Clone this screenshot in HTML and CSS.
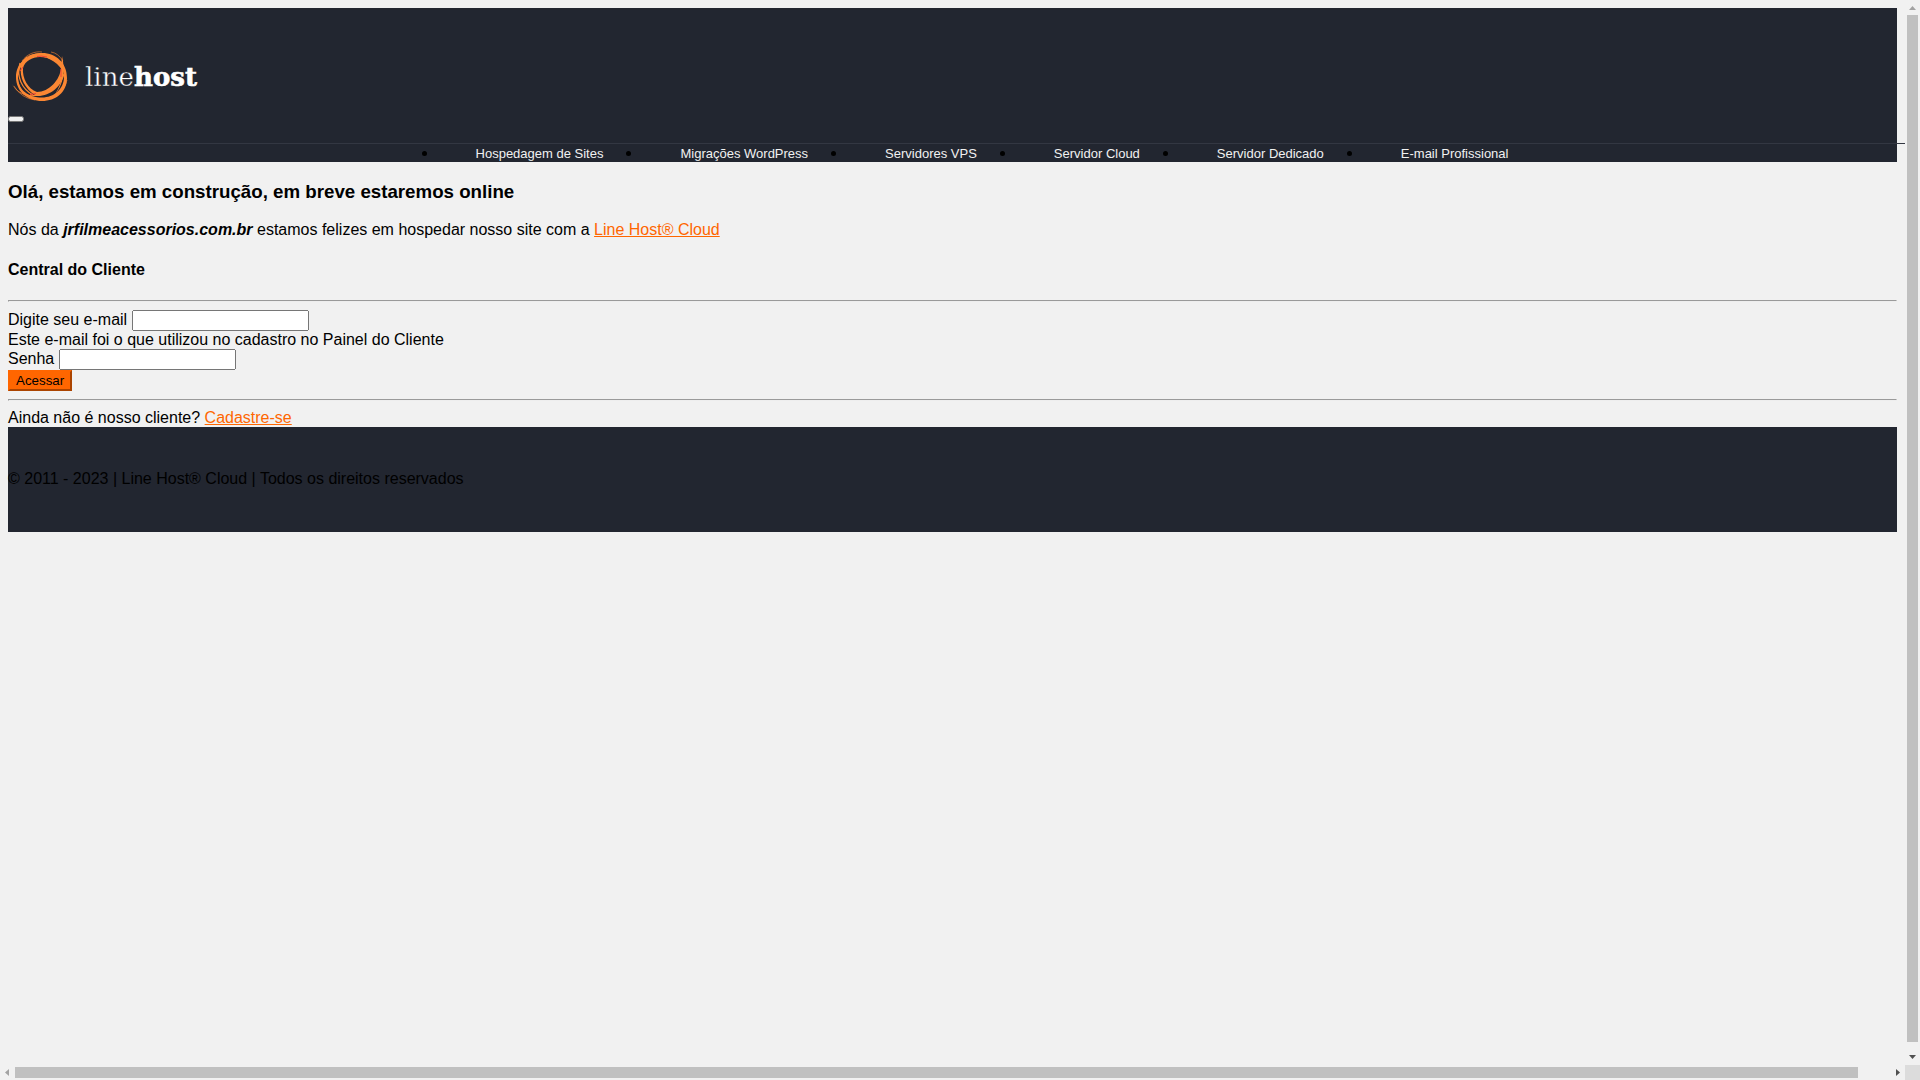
FILE: index.html
```html
<!DOCTYPE html>
<html lang="pt-br">
<head>
    <meta charset="UTF-8">
    <meta name="viewport" content="width=device-width, initial-scale=1">
    <title>Line Host® Cloud</title>
    <link rel="stylesheet" href="styles.css">
</head>
<body>
    <div class="page">
        <header class="header">
            <a class="logo" href="#" aria-label="linehost">
                <svg width="200" height="66" viewBox="0 0 200 66">
                    <g fill="#fb8733">
                        <path fill-rule="evenodd" d="M34 10C48 10 59 20 59 35C59 49 48 58 34 58C20 58 8 49 8 34C8 20 20 10 34 10ZM33 13C21 13 10 22 10 35C10 47 21 54.500 34 54.500C46 54.500 56 46 56 34C56 21 46 13 33 13Z"/>
                        <path fill-rule="evenodd" d="M32 11C43 10 53 17 56 24C56 39 43 52 27 52C17 46 11 34 13 23C16 15 23 12 32 11ZM32 14C24 14 17 18 15 25C14 35 20 46 29 49C41 49 52 37 53 25C49 18 41 14 32 14Z"/>
                        <path d="M17 15C27 7 46 9 55 22L55 28C45 13 28 10 17 15Z"/>
                        <path d="M4 41C9 49 17 53 27 52L30 50C38 51 48 44 53 34L57 29C54 44 41 54 28 53C16 54 8 49 4 41Z"/>
                        <path d="M54 13C57 26 57 41 45 54C53 44 55 33 53 24Z"/>
                    </g>
                    <g fill="none" stroke="#fb8733">
                        <path d="M14 18C19 11 27 8 34 9M43 9Q50 10 55 18M6 43Q13 55 27 57M45 53Q57 48 59 37" stroke-width="0.6"/>
                        <path d="M19 14C9 23 6 37 14 48M12 20C8 34 14 46 25 52" stroke-width="1.2"/>
                    </g>
                    <path d="M29 13.500Q33 12.500 39 14M12 28L15 24M53 26V34M22 51.500L28 50.500" fill="none" stroke="#f04438" stroke-width="1"/>
                    <text class="logo-line" x="77" y="43">line</text>
                    <text class="logo-host" x="126" y="43">host</text>
                </svg>
            </a>
            <button class="menu-toggle" type="button" aria-label="Menu"></button>
            <nav>
                <ul class="menu">
                    <li><a href="#">Hospedagem de Sites</a></li>
                    <li><a href="#">Migrações WordPress</a></li>
                    <li><a href="#">Servidores VPS</a></li>
                    <li><a href="#">Servidor Cloud</a></li>
                    <li><a href="#">Servidor Dedicado</a></li>
                    <li><a href="#">E-mail Profissional</a></li>
                </ul>
            </nav>
        </header>

        <main>
            <h3>Olá, estamos em construção, em breve estaremos online</h3>
            <p>Nós da <b><i>jrfilmeacessorios.com.br</i></b> estamos felizes em hospedar nosso site com a <a class="link" href="#">Line Host® Cloud</a></p>
            <h4>Central do Cliente</h4>
            <hr>
            <form>
                <div>
                    <label for="email">Digite seu e-mail</label>
                    <input type="email" id="email" name="email">
                    <div>Este e-mail foi o que utilizou no cadastro no Painel do Cliente</div>
                </div>
                <div>
                    <label for="senha">Senha</label>
                    <input type="password" id="senha" name="senha">
                </div>
                <button class="btn" type="submit">Acessar</button>
            </form>
            <hr>
            <div>Ainda não é nosso cliente? <a class="link" href="#">Cadastre-se</a></div>
        </main>

        <footer class="footer">© 2011 - 2023 | Line Host® Cloud | Todos os direitos reservados</footer>
    </div>

    <div class="bar bar-y" aria-hidden="true">
        <svg width="15" height="15"><path d="M4 10L7.500 6L11 10Z" fill="#a3a3a3"/></svg>
        <div class="track"><div class="thumb"></div></div>
        <svg width="15" height="15"><path d="M4 5L7.500 9L11 5Z" fill="#505050"/></svg>
    </div>
    <div class="bar bar-x" aria-hidden="true">
        <svg width="15" height="15"><path d="M9 4L5 7.500L9 11Z" fill="#a3a3a3"/></svg>
        <div class="track"><div class="thumb"></div></div>
        <svg width="15" height="15"><path d="M6 4L10 7.500L6 11Z" fill="#505050"/></svg>
    </div>
    <div class="corner"></div>
</body>
</html>
```
FILE: styles.css
```css
* {
    box-sizing: border-box;
}
body {
    margin: 0;
    height: 100vh;
    display: grid;
    grid-template-columns: minmax(0, 1fr) 15px;
    grid-template-rows: minmax(0, 1fr) 15px;
    background: #f1f1f1;
    color: #000;
    font-family: "Liberation Sans", Arial, sans-serif;
    font-size: 16px;
}
.page {
    padding: 8px;
    overflow: hidden;
}
.header {
    background: #222630;
    padding-top: 35px;
}
.logo,
.logo svg {
    display: block;
}
.logo {
    width: 200px;
}
.logo text {
    font-family: "DejaVu Serif", serif;
    font-size: 26px;
    fill: #fff;
}
.logo .logo-line {
    stroke: #222630;
    stroke-width: 0.4px;
}
.logo .logo-host {
    font-weight: bold;
    stroke: #fff;
    stroke-width: 0.6px;
}
.menu-toggle {
    display: block;
    margin-top: 7px;
    padding: 1px 6px;
}
.menu {
    box-sizing: content-box;
    display: flex;
    justify-content: center;
    width: 100%;
    margin: 21px 0 0;
    padding: 0 0 0 40px;
    border-top: 1px solid #333742;
}
.menu li {
    padding: 0 39px 0 38px;
}
.menu a {
    color: #f1f1f1;
    font-size: 13px;
    text-decoration: none;
    white-space: nowrap;
}
input {
    width: 177px;
}
.link {
    color: #ff6600;
}
.btn {
    display: block;
    background: #ff6600;
    border: 2px outset #ff6600;
    color: #000;
}
.footer {
    background: #222630;
    padding: 43px 0 44px;
}

/* scrollbars */
.bar {
    display: flex;
}
.bar svg {
    flex: none;
}
.bar-y {
    flex-direction: column;
}
.bar-x {
    grid-row: 2;
}
.track {
    flex: 1;
}
.thumb {
    background: #c0c0c0;
}
.bar-y .thumb {
    width: 11px;
    height: 99.2%;
    margin: 0 2px;
}
.bar-x .thumb {
    width: 98.3%;
    height: 11px;
    margin: 2px 0;
}
.corner {
    background: #dcdcdc;
}
```
